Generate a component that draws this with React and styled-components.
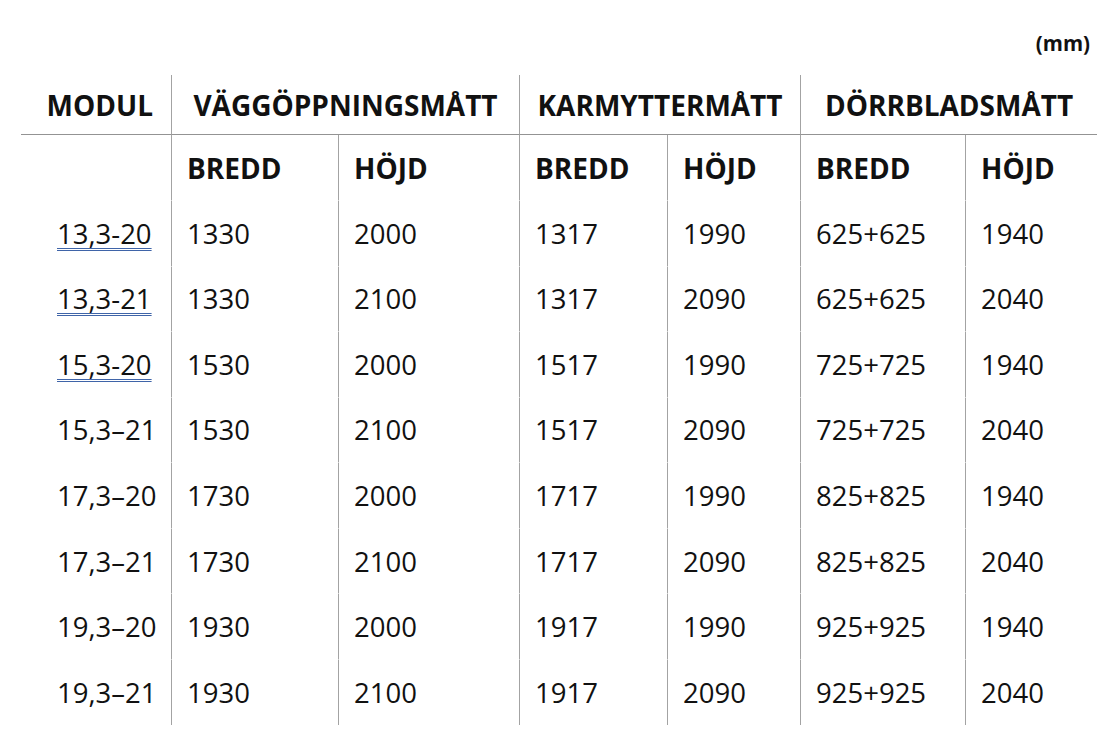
import React from 'react';
import styled, { createGlobalStyle } from 'styled-components';

const GlobalStyle = createGlobalStyle`
  body {
    margin: 0;
    background: #fff;
    font-family: "Open Sans", "Noto Sans", sans-serif;
    color: #111;
  }
`;

const Page = styled.div`
  padding: 26px 20px 20px 21px;
`;

const Unit = styled.div`
  text-align: right;
  font-size: 20.5px;
  font-weight: 700;
  line-height: 34px;
  padding-right: 7px;
  margin-bottom: 15px;
`;

const Table = styled.table`
  width: 1076px;
  table-layout: fixed;
  border-collapse: separate;
  border-spacing: 0;
`;

const GroupHead = styled.th`
  height: 59px;
  padding: 0;
  font-size: 28px;
  font-weight: 700;
  text-align: ${(p) => (p.$first ? 'right' : 'center')};
  padding-right: ${(p) => (p.$first ? '18px' : '0')};
  border-bottom: 1px solid #939393;
  border-left: ${(p) => (p.$first ? 'none' : '1px solid #a3a3a3')};
  vertical-align: middle;
  white-space: nowrap;
`;

const SubHead = styled.th`
  height: 65px;
  padding: 0 0 0 15px;
  font-size: 28px;
  font-weight: 700;
  text-align: left;
  border-left: ${(p) => (p.$first ? 'none' : '1px solid #a3a3a3')};
  vertical-align: middle;
`;

const Cell = styled.td`
  height: 64.57px;
  padding: ${(p) => (p.$first ? '0 0 0 36px' : '0 0 0 15px')};
  font-size: 27.5px;
  font-weight: 400;
  text-align: left;
  border-top: 1px solid #fff;
  border-left: ${(p) => (p.$first ? 'none' : '1px solid #a3a3a3')};
  vertical-align: middle;
  white-space: nowrap;
`;

const ModLink = styled.a`
  color: inherit;
  text-decoration: underline double #3f64a8;
  text-decoration-thickness: 1px;
  text-underline-offset: 4px;
`;

const columns = [150, 167, 181, 148, 133, 165, 132];

const rows = [
  { mod: '13,3-20', link: true, v: ['1330', '2000', '1317', '1990', '625+625', '1940'] },
  { mod: '13,3-21', link: true, v: ['1330', '2100', '1317', '2090', '625+625', '2040'] },
  { mod: '15,3-20', link: true, v: ['1530', '2000', '1517', '1990', '725+725', '1940'] },
  { mod: '15,3–21', v: ['1530', '2100', '1517', '2090', '725+725', '2040'] },
  { mod: '17,3–20', v: ['1730', '2000', '1717', '1990', '825+825', '1940'] },
  { mod: '17,3–21', v: ['1730', '2100', '1717', '2090', '825+825', '2040'] },
  { mod: '19,3–20', v: ['1930', '2000', '1917', '1990', '925+925', '1940'] },
  { mod: '19,3–21', v: ['1930', '2100', '1917', '2090', '925+925', '2040'] },
];

const App = () => {
  return (
    <Page>
      <GlobalStyle />
      <Unit>(mm)</Unit>
      <Table>
        <colgroup>
          {columns.map((w, i) => (
            <col key={i} style={{ width: w }} />
          ))}
        </colgroup>
        <thead>
          <tr>
            <GroupHead $first>MODUL</GroupHead>
            <GroupHead colSpan={2}>VÄGGÖPPNINGSMÅTT</GroupHead>
            <GroupHead colSpan={2}>KARMYTTERMÅTT</GroupHead>
            <GroupHead colSpan={2}>DÖRRBLADSMÅTT</GroupHead>
          </tr>
          <tr>
            <SubHead $first />
            <SubHead>BREDD</SubHead>
            <SubHead>HÖJD</SubHead>
            <SubHead>BREDD</SubHead>
            <SubHead>HÖJD</SubHead>
            <SubHead>BREDD</SubHead>
            <SubHead>HÖJD</SubHead>
          </tr>
        </thead>
        <tbody>
          {rows.map((r) => (
            <tr key={r.mod}>
              <Cell $first>
                {r.link ? <ModLink href="#">{r.mod}</ModLink> : r.mod}
              </Cell>
              {r.v.map((val, i) => (
                <Cell key={i}>{val}</Cell>
              ))}
            </tr>
          ))}
        </tbody>
      </Table>
    </Page>
  );
};

export default App;
